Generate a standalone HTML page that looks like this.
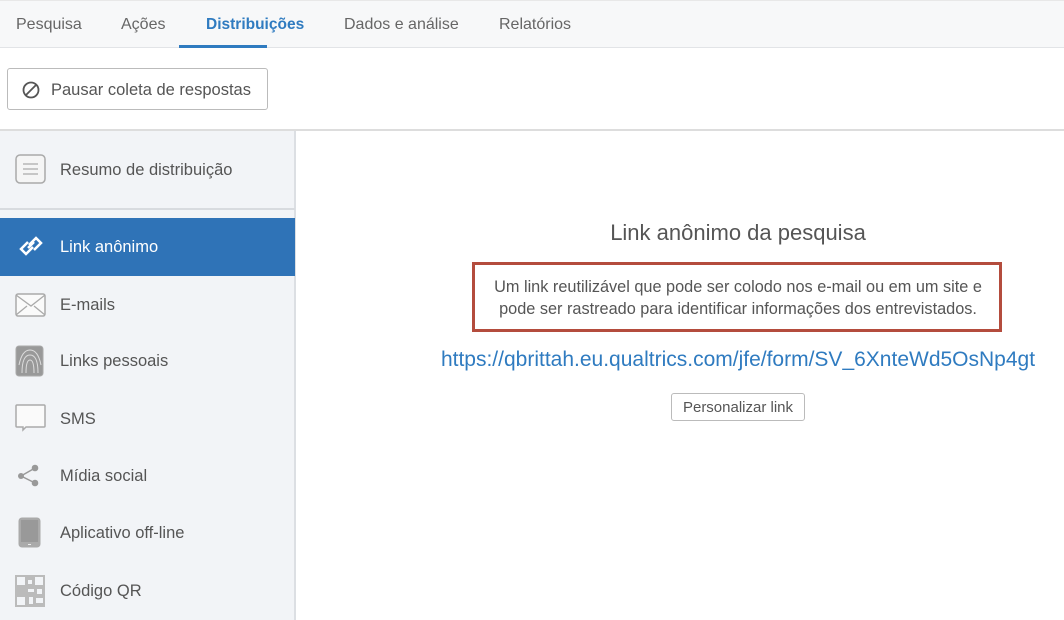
<!DOCTYPE html>
<html><head><meta charset="utf-8"><style>
*{box-sizing:border-box;margin:0;padding:0}
body{width:1064px;height:620px;overflow:hidden;background:#fff;font-family:"Liberation Sans",sans-serif;color:#555;position:relative}
.nav{position:absolute;left:0;top:0;width:1064px;height:48px;background:#f7f8f9;border-bottom:1px solid #e2e4e7;border-top:1px solid #e8e8e8}
.nav span{position:absolute;top:15px;font-size:16px;color:#666}
.nav .act{color:#2f7bc0;font-weight:bold;font-size:15.5px}
.ul{position:absolute;left:179px;top:44px;width:88px;height:3px;background:#2f7bc0}
.btn{position:absolute;left:7px;top:68px;width:261px;height:42px;border:1px solid #bbb;border-radius:3px;font-size:16.5px;color:#555;padding:12px 0 0 43px}
.hr{position:absolute;left:0;top:129px;width:1064px;height:2px;background:#ddd}
.side{position:absolute;left:0;top:131px;width:296px;height:489px;background:#f2f4f7;border-right:2px solid #dcdfe3}
.it{position:absolute;left:60px;font-size:16.5px;color:#555}
.ic{position:absolute;left:15px}
.sel{position:absolute;left:0;top:87px;width:295px;height:58px;background:#2f73b7}
.t{position:absolute;left:206px;width:1064px;text-align:center}
</style></head><body>
<div class="nav">
<span style="left:16px">Pesquisa</span><span style="left:121px">Ações</span><span class="act" style="left:206px">Distribuições</span><span style="left:344px">Dados e análise</span><span style="left:499px">Relatórios</span>
<div class="ul"></div></div>
<div class="btn">Pausar coleta de respostas
<svg style="position:absolute;left:14px;top:12px" width="18" height="18" viewBox="0 0 18 18"><circle cx="9" cy="9" r="7.5" fill="none" stroke="#555" stroke-width="1.8"/><line x1="4" y1="14" x2="14" y2="4" stroke="#555" stroke-width="1.8"/></svg></div>
<div class="hr"></div>
<div class="side">
<svg class="ic" style="top:23px" width="32" height="30"><rect x="1" y="1" width="29" height="28" rx="4" fill="#f5f5f5" stroke="#aaa" stroke-width="1.5"/><path d="M8 10h15M8 15h15M8 20h15" stroke="#aaa" stroke-width="1.3"/></svg>
<div class="it" style="top:30px">Resumo de distribuição</div>
<div style="position:absolute;left:0;top:77px;width:295px;height:2px;background:#d8dbdf"></div>
<div class="sel"></div>
<svg class="ic" style="top:100px" width="32" height="30" viewBox="0 0 32 30"><path d="M13 11l-7 7 5 5 7-7M19 19l7-7-5-5-7 7M13 17l6-6" fill="none" stroke="#fff" stroke-width="2.5"/></svg>
<div class="it" style="top:107px;color:#fff">Link anônimo</div>
<svg class="ic" style="top:162px" width="32" height="26"><rect x="1" y="1" width="29" height="22" rx="2" fill="#fafafa" stroke="#aaa" stroke-width="1.5"/><path d="M1 2l15 11L30 2M1 22l11-9M30 22l-11-9" fill="none" stroke="#aaa" stroke-width="1.3"/></svg>
<div class="it" style="top:165px">E-mails</div>
<svg class="ic" style="top:214px" width="30" height="32"><rect x="1" y="1" width="27" height="30" rx="3" fill="#999" stroke="#aaa"/><path d="M7 28c0-10 2-18 8-18s8 8 8 18M11 28c0-8 1-13 4-13s4 5 4 13M4 20c2-10 6-15 11-15s9 5 11 15" fill="none" stroke="#ddd" stroke-width="1"/></svg>
<div class="it" style="top:221px">Links pessoais</div>
<svg class="ic" style="top:273px" width="32" height="28"><path d="M2 1h27a1 1 0 0 1 1 1v20a1 1 0 0 1-1 1H11l-3 3v-3H2a1 1 0 0 1-1-1V2a1 1 0 0 1 1-1z" fill="#fafafa" stroke="#aaa" stroke-width="1.5"/></svg>
<div class="it" style="top:279px">SMS</div>
<svg class="ic" style="top:331px" width="32" height="28"><path d="M6 14l14-8M6 14l14 7" stroke="#999" stroke-width="1.5"/><circle cx="6" cy="14" r="3" fill="#999"/><circle cx="20" cy="6" r="3.3" fill="#999"/><circle cx="20" cy="21" r="3.3" fill="#999"/></svg>
<div class="it" style="top:336px">Mídia social</div>
<svg class="ic" style="top:386px" width="32" height="32"><rect x="4" y="1" width="21" height="29" rx="3" fill="#aaa" stroke="#aaa"/><rect x="6" y="3" width="17" height="22" fill="#999"/><line x1="13" y1="27.5" x2="16" y2="27.5" stroke="#eee"/></svg>
<div class="it" style="top:393px">Aplicativo off-line</div>
<svg class="ic" style="top:444px" width="30" height="32"><rect x="0" y="0" width="30" height="32" fill="#bbb"/><path d="M2 2h8v8H2zM20 2h8v8h-8zM2 22h8v8H2zM13 5h4v4h-4zM13 14h6v3h-6zM22 14h5v5h-5zM14 22h4v7h-4zM21 23h7v5h-7z" fill="#f2f4f7"/></svg>
<div class="it" style="top:451px">Código QR</div>
</div>
<div class="t" style="top:220px;font-size:22px;color:#555">Link anônimo da pesquisa</div>
<div style="position:absolute;left:472px;top:262px;width:530px;height:70px;border:3px solid #b44c3d"></div>
<div class="t" style="top:276px;font-size:16.3px;line-height:22px;color:#555">Um link reutilizável que pode ser colodo nos e-mail ou em um site e<br>pode ser rastreado para identificar informações dos entrevistados.</div>
<div class="t" style="top:348px;font-size:21px;color:#2f7bc0">https://qbrittah.eu.qualtrics.com/jfe/form/SV_6XnteWd5OsNp4gt</div>
<div style="position:absolute;left:671px;top:393px;width:134px;height:28px;border:1px solid #bbb;border-radius:3px;font-size:15px;color:#555;text-align:center;padding-top:5px;white-space:nowrap">Personalizar link</div>
</body></html>
